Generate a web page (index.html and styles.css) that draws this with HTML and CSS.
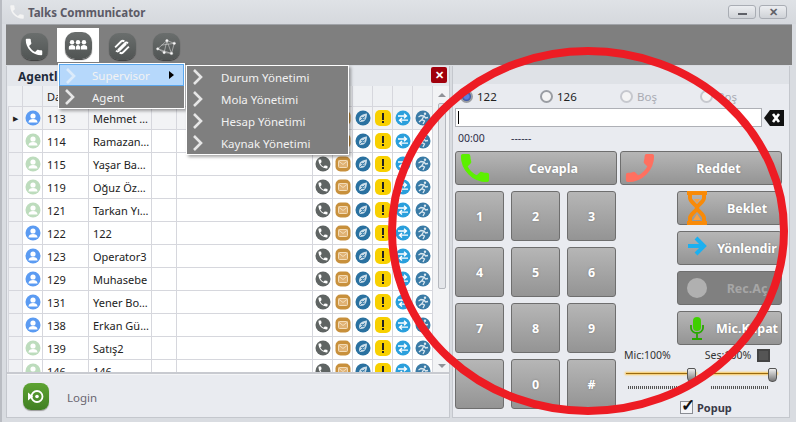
FILE: index.html
```html
<!DOCTYPE html>
<html lang="tr">
<head>
    <meta charset="UTF-8">
    <title>Talks Communicator</title>
    <link rel="stylesheet" href="styles.css">
</head>
<body>
    <svg class="defs" width="0" height="0">
        <symbol id="call" viewBox="0 0 24 24"><path d="M6.600 10.800c1.400 2.800 3.800 5.100 6.600 6.600l2.200-2.200c.3-.3.7-.4 1-.2 1.100.4 2.300.6 3.600.6.600 0 1 .4 1 1V20c0 .6-.4 1-1 1C10.600 21 3 13.400 3 4c0-.6.4-1 1-1h3.500c.6 0 1 .4 1 1 0 1.300.2 2.500.6 3.600.1.300 0 .7-.2 1z"/></symbol>
        <symbol id="chev" viewBox="0 0 12 16"><path d="M2 1l7 7-7 7" fill="none" stroke="currentColor" stroke-width="2.600"/></symbol>
        <symbol id="i-user" viewBox="0 0 16 16"><circle cx="8" cy="8" r="7.500" fill="currentColor"/><circle cx="8" cy="6" r="2.600" fill="#fff"/><path d="M3.400 12.400c.4-2.600 2.200-3.400 4.600-3.400s4.200.8 4.600 3.400z" fill="#fff"/></symbol>
        <symbol id="i-phone" viewBox="0 0 16 16"><circle cx="8" cy="8" r="7.500" fill="#5f6463"/><svg x="2" y="2" width="12" height="12" viewBox="0 0 24 24"><path fill="#fff" d="M6.600 10.800c1.400 2.800 3.800 5.100 6.600 6.600l2.200-2.200c.3-.3.7-.4 1-.2 1.100.4 2.300.6 3.600.6.600 0 1 .4 1 1V20c0 .6-.4 1-1 1C10.600 21 3 13.400 3 4c0-.6.4-1 1-1h3.500c.6 0 1 .4 1 1 0 1.300.2 2.500.6 3.600.1.300 0 .7-.2 1z"/></svg></symbol>
        <symbol id="i-mail" viewBox="0 0 16 16"><rect x=".5" y=".5" width="15" height="15" rx="5" fill="#c8903c"/><rect x="3.500" y="4.500" width="9" height="7" rx="1" fill="#e0b274" stroke="#f3dcb8"/><path d="M3.500 5l4.500 3.500L12.500 5" fill="none" stroke="#f3dcb8"/></symbol>
        <symbol id="i-leaf" viewBox="0 0 16 16"><circle cx="8" cy="8" r="7.500" fill="#2a71a0"/><path d="M4 10c0-4 3-6 8-6.500 0 5-2 8.500-6.500 8.500-.8 0-1.200-.8-1.500-2z" fill="#c9dce8"/><path d="M5 11l5-5M6 7.500l4 .5M7 9.500l2.500 0" stroke="#2a71a0" stroke-width=".8"/></symbol>
        <symbol id="i-warn" viewBox="0 0 16 16"><rect width="16" height="16" rx="5" fill="#f8d000"/><rect x="7" y="3" width="2" height="7" fill="#222"/><rect x="7" y="11" width="2" height="2" fill="#222"/></symbol>
        <symbol id="i-swap" viewBox="0 0 16 16"><circle cx="8" cy="8" r="7.500" fill="#2a9fdc"/><path d="M3 6h8M9 3.800L11.500 6 9 8.200M13 10.200H5M7 8l-2.500 2.200L7 12.400" fill="none" stroke="#fff" stroke-width="1.300"/></symbol>
        <symbol id="i-run" viewBox="0 0 16 16"><circle cx="8" cy="8" r="7.500" fill="#3a7ba6"/><circle cx="10" cy="3.800" r="1.200" fill="#dbe8f0"/><path d="M3.500 7L6 5.500l3 .5-2 3.500 2.500 1.500-1.500 3M7 9.500l-3 2.500M9 6l1.500 2 2.500-.5" fill="none" stroke="#dbe8f0" stroke-width="1.300"/></symbol>
    </svg>

    <div class="window">
        <div class="titlebar">
            <svg class="title-icon"><use href="#call"/></svg>
            <span class="title-text">Talks Communicator</span>
            <div class="win-btns">
                <button class="win-btn"><span class="min-mark"></span></button>
                <button class="win-btn close-mark">✕</button>
            </div>
        </div>
        <div class="main">
            <div class="toolbar">
                <div class="tool"><span class="tool-face">
                    <svg class="tool-svg" viewBox="0 0 24 24"><use href="#call"/></svg>
                </span></div>
                <div class="tool active"><span class="tool-face">
                    <svg class="tool-svg" viewBox="0 0 24 24">
                        <circle cx="5.500" cy="9" r="2.400"/><circle cx="12" cy="9" r="2.400"/><circle cx="18.500" cy="9" r="2.400"/>
                        <path d="M2 17v-2.500c0-1.500 1.500-2.500 3.500-2.500S9 13 9 14.500V17zM9.800 17v-2.500c0-1.500 1-2.500 2.200-2.500s2.200 1 2.200 2.500V17zM15 17v-2.500c0-1.500 1.500-2.500 3.500-2.500s3.500 1 3.500 2.500V17z"/>
                    </svg>
                </span></div>
                <div class="tool"><span class="tool-face">
                    <svg class="tool-svg stroked" viewBox="0 0 24 24">
                        <path d="M4.500 12.500L11 6a2.500 2.500 0 0 1 3.500 0M7.500 15.500L15 8a2.500 2.500 0 0 1 3.500 0M19.500 11.500L13 18a2.500 2.500 0 0 1-3.500 0M16.500 8.500L9 16a2.500 2.500 0 0 1-3.500 0"/>
                    </svg>
                </span></div>
                <div class="tool"><span class="tool-face">
                    <svg class="tool-svg thin" viewBox="0 0 24 24">
                        <path d="M3 14L13 5l8 3-3 11-8-1zM3 14l15 5M13 5l-3 13M13 5l5 14M7 10l14-2"/>
                        <circle cx="3" cy="14" r="1.300"/><circle cx="13" cy="5" r="1.300"/><circle cx="21" cy="8" r="1.300"/><circle cx="18" cy="19" r="1.300"/><circle cx="10" cy="18" r="1.300"/>
                    </svg>
                </span></div>
            </div>
            <div class="content">
                <section class="left-panel">
                    <div class="panel-head">
                        <strong class="panel-title">Agentler</strong>
                        <button class="panel-close">✕</button>
                    </div>
                    <div class="grid-wrap">
                        <div class="grid">
                            <div class="row head">
                                <span class="cell"></span><span class="cell"></span><span class="cell txt">Dahili</span><span class="cell"></span><span class="cell"></span><span class="cell"></span>
                                <span class="cell"></span><span class="cell"></span><span class="cell"></span><span class="cell"></span><span class="cell"></span><span class="cell"></span>
                            </div>
                            <div id="rows"></div>
                        </div>
                        <div class="scroll">
                            <span class="arrow up"></span>
                            <span class="thumb"></span>
                            <span class="arrow down"></span>
                        </div>
                    </div>
                    <div class="login-bar">
                        <span class="login-icon">
                            <svg viewBox="0 0 26 26" class="login-svg"><circle cx="14" cy="13" r="5.500"/><circle cx="14" cy="13" r="1.800" class="solid"/><path d="M5 9l5 4-5 4z" class="solid"/></svg>
                        </span>
                        <span class="login-text">Login</span>
                    </div>
                </section>

                <section class="right-panel">
                    <div class="band"></div>
                    <div class="lines">
                        <label class="line on"><span class="radio"></span>122</label>
                        <label class="line"><span class="radio"></span>126</label>
                        <label class="line off"><span class="radio"></span>Boş</label>
                        <label class="line off"><span class="radio"></span>Boş</label>
                    </div>
                    <div class="dial">
                        <div class="dial-input"><span class="caret"></span></div>
                        <svg class="backspace" viewBox="0 0 20 16"><path d="M6 0h14v16H6L0 8z" fill="#111"/><path d="M9 4l6 8M15 4l-6 8" stroke="#fff" stroke-width="2.600"/></svg>
                    </div>
                    <div class="status"><span class="time">00:00</span><span>------</span></div>
                    <div class="call-btns">
                        <button class="btn call"><svg class="call-icon green"><use href="#call"/></svg>Cevapla</button>
                        <button class="btn call"><svg class="call-icon red"><use href="#call"/></svg>Reddet</button>
                    </div>
                    <div class="lower">
                        <div class="keys">
                            <button class="btn">1</button><button class="btn">2</button><button class="btn">3</button>
                            <button class="btn">4</button><button class="btn">5</button><button class="btn">6</button>
                            <button class="btn">7</button><button class="btn">8</button><button class="btn">9</button>
                            <button class="btn"></button><button class="btn">0</button><button class="btn">#</button>
                        </div>
                        <div class="side">
                            <button class="btn act">
                                <svg class="act-icon" viewBox="0 0 20 34"><path d="M0 2h20M0 32h20M3 2v5c0 4 7 7 7 10s-7 6-7 10v5M17 2v5c0 4-7 7-7 10s7 6 7 10v5" fill="none" stroke="#f88a08" stroke-width="4"/><path d="M7 8h6l-3 4zM10 23l4 6H6z" fill="#f8a040"/></svg>
                                <span>Beklet</span>
                            </button>
                            <button class="btn act">
                                <svg class="act-icon" viewBox="0 0 20 34"><path d="M1 15h13M9 7l8 8-8 8" fill="none" stroke="#1cb0f0" stroke-width="4"/></svg>
                                <span>Yönlendir</span>
                            </button>
                            <button class="btn act rec">
                                <svg class="act-icon" viewBox="0 0 20 34"><circle cx="10" cy="17" r="10" fill="#b0b0b0"/></svg>
                                <span>Rec.Aç</span>
                            </button>
                            <button class="btn act">
                                <svg class="act-icon" viewBox="0 0 20 34"><rect x="6" y="6" width="8" height="14" rx="4" fill="#3fd000"/><path d="M4 14v3c0 3 3 5 6 5s6-2 6-5v-3M10 22v5M5 28h10" fill="none" stroke="#28a800" stroke-width="1.800"/></svg>
                                <span>Mic.Kapat</span>
                            </button>
                            <div class="levels">
                                <span>Mic:100%</span>
                                <span class="ses">Ses:100%</span>
                                <span class="mute"></span>
                            </div>
                            <div class="sliders">
                                <div class="slider"><span class="track"></span><span class="knob"></span><span class="ticks"></span></div>
                                <div class="slider wide"><span class="track"></span><span class="knob"></span><span class="ticks"></span></div>
                            </div>
                            <label class="popup"><span class="check">✓</span>Popup</label>
                        </div>
                    </div>
                </section>
            </div>
        </div>
    </div>

    <div class="menu">
        <div class="menu-item hover"><svg class="chev"><use href="#chev"/></svg>Supervisor<span class="more"></span></div>
        <div class="menu-item"><svg class="chev"><use href="#chev"/></svg>Agent</div>
    </div>
    <div class="menu sub">
        <div class="menu-item"><svg class="chev"><use href="#chev"/></svg>Durum Yönetimi</div>
        <div class="menu-item"><svg class="chev"><use href="#chev"/></svg>Mola Yönetimi</div>
        <div class="menu-item"><svg class="chev"><use href="#chev"/></svg>Hesap Yönetimi</div>
        <div class="menu-item"><svg class="chev"><use href="#chev"/></svg>Kaynak Yönetimi</div>
    </div>

    <svg class="ring" width="796" height="422"><ellipse cx="588" cy="231" rx="196" ry="180"/></svg>

    <script src="script.js"></script>
</body>
</html>
```

FILE: styles.css
```css
* {
    box-sizing: border-box;
}
body {
    font-family: 'Noto Sans', 'Liberation Sans', sans-serif;
    font-size: 11px;
    margin: 0;
    width: 796px;
    height: 422px;
    overflow: hidden;
    position: relative;
    color: #222;
    background-color: #d9dce1;
}
button {
    font-family: inherit;
    padding: 0;
}
.defs {
    position: absolute;
}
.window {
    height: 422px;
    display: flex;
    flex-direction: column;
    border-left: 2px solid #b9bcc2;
}
.titlebar {
    height: 24px;
    display: flex;
    align-items: center;
    padding: 0 9px 0 6px;
    background: linear-gradient(#dfe2e6, #d5d8dd);
}
.title-icon {
    width: 18px;
    height: 18px;
    fill: #f4f4f4;
}
.title-text {
    margin-left: 2px;
    font-weight: bold;
    font-size: 11.500px;
    color: #5c5a66;
}
.win-btns {
    margin-left: auto;
    display: flex;
    gap: 3px;
    margin-top: -1px;
}
.win-btn {
    width: 28px;
    height: 14px;
    border: 1px solid #a9adb4;
    border-radius: 3px;
    background: linear-gradient(#eceef1, #cfd2d7);
    display: flex;
    align-items: center;
    justify-content: center;
}
.min-mark {
    width: 9px;
    height: 2px;
    margin-top: 5px;
    background-color: #5f6168;
}
.close-mark {
    font-size: 11px;
    font-weight: bold;
    color: #5f6168;
}
.main {
    flex: 1;
    padding: 0 4px 4px 4px;
    display: flex;
    flex-direction: column;
}
.toolbar {
    height: 41px;
    background-color: #7f7f7f;
    display: flex;
    padding-left: 7px;
    border-top: 1px solid #a0a3a8;
}
.tool {
    width: 42px;
    height: 37px;
    margin-top: 3px;
    margin-right: 2px;
    display: flex;
    align-items: center;
    justify-content: center;
}
.tool.active {
    background-color: #fff;
    height: 34px;
}
.tool-face {
    width: 27px;
    height: 27px;
    border-radius: 10px;
    background: linear-gradient(#6a6e6d, #505453);
    box-shadow: 0 1px 1px #3c3c3c;
    display: flex;
    align-items: center;
    justify-content: center;
}
.tool-svg {
    width: 22px;
    height: 22px;
    fill: #fff;
}
.tool-svg.stroked {
    fill: none;
    stroke: #fff;
    stroke-width: 2;
}
.tool-svg.thin {
    stroke: #ddd;
    stroke-width: .6;
}
.tool-svg.thin path {
    fill: none;
}
.content {
    flex: 1;
    display: flex;
    gap: 2px;
    padding-top: 1px;
    min-height: 0;
}
.left-panel {
    width: 444px;
    display: flex;
    flex-direction: column;
    background-color: #e9ebf0;
    border: 1px solid #c4c7cd;
    border-top: none;
}
.panel-head {
    height: 20px;
    display: flex;
    align-items: center;
    justify-content: space-between;
    padding-left: 11px;
    padding-right: 2px;
    background-color: #e4e7ec;
}
.panel-title {
    font-size: 12px;
    color: #1e2a3a;
}
.panel-close {
    width: 16px;
    height: 16px;
    margin-top: -3px;
    background-color: #a0000c;
    border: none;
    border-radius: 2px;
    color: #fff;
    font-size: 11px;
    font-weight: bold;
}
.grid-wrap {
    height: 288px;
    display: flex;
    overflow: hidden;
    padding-left: 1px;
    border-bottom: 2px solid #c8cad0;
}
.grid {
    width: 425px;
}
.row {
    display: grid;
    grid-template-columns: 15px 20px 46px 63px 25px 136px repeat(6, 20px);
    height: 23px;
    background-color: #fff;
}
.row.head {
    height: 21px;
    background-color: #eef0f3;
}
.row.selected {
    background-color: #f2f3f5;
}
.cell {
    display: flex;
    align-items: center;
    justify-content: center;
    border-right: 1px solid #d6d7dd;
    border-bottom: 1px solid #d6d7dd;
    white-space: nowrap;
    overflow: hidden;
}
.cell.txt {
    justify-content: flex-start;
    padding-left: 4px;
}
.cell.mark {
    background-color: #f0f1f4;
    border-left: 1px solid #d6d7dd;
    font-size: 7px;
}
.cell svg {
    width: 16px;
    height: 16px;
}
.blue {
    color: #5b9bf2;
}
.pale {
    color: #bddcbd;
}
.scroll {
    width: 17px;
    display: flex;
    flex-direction: column;
    align-items: center;
    background-color: #f2f3f5;
    padding-left: 1px;
}
.arrow {
    width: 0;
    height: 0;
    border-left: 4px solid transparent;
    border-right: 4px solid transparent;
}
.arrow.up {
    margin-top: 7px;
    border-bottom: 4px solid #8f9298;
}
.arrow.down {
    margin-top: 75px;
    border-top: 4px solid #8f9298;
}
.thumb {
    width: 8px;
    height: 186px;
    margin-top: 6px;
    margin-left: 1px;
    background-color: #e4e6ea;
    border: 1px solid #b5b8be;
    border-radius: 2px;
}
.login-bar {
    flex: 1;
    display: flex;
    align-items: center;
    padding-left: 16px;
    border-top: 1px solid #f4f5f7;
}
.login-icon {
    width: 26px;
    height: 27px;
    margin-top: 1px;
    border-radius: 8px;
    background: linear-gradient(#5da332, #417f24);
    box-shadow: 0 1px 1px #999;
}
.login-svg {
    width: 26px;
    height: 27px;
    fill: none;
    stroke: #fff;
    stroke-width: 1.800;
}
.login-svg .solid {
    fill: #fff;
    stroke: none;
}
.login-text {
    margin-left: 18px;
    margin-top: 2px;
    font-size: 11.500px;
    color: #6a6670;
}
.right-panel {
    width: 338px;
    background-color: #e9ebf0;
    border: 1px solid #c4c7cd;
    border-top: none;
    padding: 0 2px;
}
.band {
    height: 18px;
    margin: 0 -2px;
    background-color: #dfe2e7;
}
.lines {
    height: 24px;
    display: flex;
    padding: 4px 0 0 5px;
}
.line {
    width: 80px;
    display: flex;
    align-items: center;
    gap: 4px;
    height: 16px;
    font-size: 11.500px;
}
.line.off {
    color: #a8aab2;
}
.radio {
    width: 13px;
    height: 13px;
    border-radius: 50%;
    background-color: #f4f4f4;
    border: 2px solid #9a9da3;
}
.line.on .radio {
    background: radial-gradient(#5d7fdc 35%, #34509e 70%);
}
.line.off .radio {
    border-color: #c6c8ce;
}
.dial {
    display: flex;
    align-items: center;
    gap: 2px;
    height: 19px;
}
.dial-input {
    width: 307px;
    height: 19px;
    background-color: #fff;
    border: 1px solid #aeb0b6;
    padding: 2px 2px;
}
.caret {
    display: block;
    width: 1px;
    height: 13px;
    background-color: #000;
}
.backspace {
    width: 20px;
    height: 16px;
}
.status {
    height: 24px;
    display: flex;
    align-items: center;
    padding-left: 3px;
    margin-top: -1px;
    font-size: 10.500px;
    color: #2e2e48;
}
.time {
    width: 53px;
}
.btn {
    border: 1px solid #6e6e6e;
    border-radius: 3px;
    background: linear-gradient(#b6b6b6, #949494);
    color: #fff;
    font-weight: bold;
    font-size: 12.500px;
    text-shadow: 0 0 2px #777;
}
.call-btns {
    display: flex;
    gap: 3px;
    height: 34px;
    margin-top: 1px;
}
.btn.call {
    width: 162px;
    display: flex;
    align-items: center;
    justify-content: center;
    padding-left: 35px;
    position: relative;
}
.call-icon {
    width: 36px;
    height: 36px;
    position: absolute;
    left: 1px;
    top: -2px;
    stroke-width: .8;
}
.call-icon.green {
    fill: #5cf000;
    stroke: #5cf000;
}
.call-icon.red {
    fill: #ff7060;
    stroke: #ff7060;
    transform: scaleX(-1);
}
.lower {
    display: flex;
    padding-top: 6px;
}
.keys {
    width: 161px;
    display: grid;
    grid-template-columns: repeat(3, 49px);
    grid-auto-rows: 50px;
    gap: 6px 7px;
}
.side {
    width: 158px;
    margin-left: 8px;
    display: flex;
    flex-direction: column;
    align-items: flex-end;
    gap: 6px;
}
.btn.act {
    width: 105px;
    height: 34px;
    display: flex;
    align-items: center;
    padding-left: 9px;
}
.btn.act span {
    flex: 1;
    text-align: center;
    padding-left: 6px;
}
.act-icon {
    width: 20px;
    height: 34px;
    flex: none;
}
.btn.rec {
    background: #808080;
    color: #a6a6a6;
    text-shadow: none;
}
.levels {
    width: 100%;
    display: flex;
    align-items: center;
    height: 14px;
    margin-top: -3px;
    font-size: 10.500px;
    color: #333;
}
.ses {
    margin-left: 34px;
}
.mute {
    width: 13px;
    height: 13px;
    margin-left: 6px;
    background-color: #555;
    border: 2px solid #444;
}
.sliders {
    width: 100%;
    display: flex;
    gap: 13px;
    height: 24px;
    padding-left: 2px;
}
.slider {
    width: 70px;
    position: relative;
}
.slider.wide {
    width: 68px;
}
.track {
    position: absolute;
    left: 0;
    right: 0;
    top: 5px;
    height: 1px;
    background-color: #9a6a10;
    box-shadow: 0 0 2px 1px #fbc95c;
}
.knob {
    position: absolute;
    right: 0;
    top: 0;
    width: 9px;
    height: 14px;
    border: 1px solid #555;
    border-radius: 2px 2px 4px 4px;
    background: linear-gradient(#eee, #777);
}
.ticks {
    position: absolute;
    left: 2px;
    right: 8px;
    top: 18px;
    height: 3px;
    background: repeating-linear-gradient(90deg, #555 0 1px, transparent 1px 2px);
}
.popup {
    align-self: flex-start;
    margin-left: 56px;
    margin-top: 2px;
    display: flex;
    align-items: center;
    gap: 4px;
    font-weight: bold;
    font-size: 11px;
    color: #3a3a48;
}
.check {
    width: 13px;
    height: 13px;
    background-color: #f4f5f8;
    border: 1px solid #8a8d94;
    font-size: 17px;
    line-height: 6px;
    color: #111;
}
/* floating menus */
.menu {
    position: absolute;
    left: 58px;
    top: 63px;
    width: 127px;
    background-color: #7f7f7f;
    border: 1px solid #fff;
    box-shadow: 2px 2px 3px rgba(0, 0, 0, 0.35);
}
.menu.sub {
    left: 186px;
    top: 65px;
    width: 163px;
}
.menu-item {
    height: 22px;
    display: flex;
    align-items: center;
    font-size: 11.500px;
    color: #f2f2f2;
    position: relative;
    padding-left: 33px;
}
.menu.sub .menu-item {
    padding-left: 34px;
}
.menu-item.hover {
    background-color: #b6d8fb;
    border: 1px solid #5aa7ee;
    padding-left: 32px;
}
.chev {
    position: absolute;
    left: 5px;
    top: 3px;
    width: 12px;
    height: 16px;
    color: #e6e6e6;
}
.menu-item.hover .chev {
    color: #dcebfa;
}
.more {
    position: absolute;
    right: 9px;
    top: 6px;
    border-left: 5px solid #000;
    border-top: 4px solid transparent;
    border-bottom: 4px solid transparent;
}
.ring {
    position: absolute;
    left: 0;
    top: 0;
    pointer-events: none;
}
.ring ellipse {
    fill: none;
    stroke: #ed1c24;
    stroke-width: 8;
}
```

FILE: script.js
```js
const agents = [
    ['113', 'Mehmet …', 'blue'],
    ['114', 'Ramazan…', 'pale'],
    ['115', 'Yaşar Ba…', 'pale'],
    ['119', 'Oğuz Öz…', 'pale'],
    ['121', 'Tarkan Yı…', 'pale'],
    ['122', '122', 'blue'],
    ['123', 'Operator3', 'blue'],
    ['129', 'Muhasebe', 'blue'],
    ['131', 'Yener Bo…', 'blue'],
    ['138', 'Erkan Gü…', 'blue'],
    ['139', 'Satış2', 'pale'],
    ['146', '146', 'pale']
];
const actions = ['i-phone', 'i-mail', 'i-leaf', 'i-warn', 'i-swap', 'i-run'];

function buildRows() {
    const rowsDiv = document.getElementById('rows');
    agents.forEach((agent, index) => {
        const row = document.createElement('div');
        row.className = index === 0 ? 'row selected' : 'row';
        let html = `<span class="cell mark">${index === 0 ? '▶' : ''}</span>`;
        html += `<span class="cell ${agent[2]}"><svg><use href="#i-user"/></svg></span>`;
        html += `<span class="cell txt">${agent[0]}</span><span class="cell txt">${agent[1]}</span>`;
        html += '<span class="cell"></span><span class="cell"></span>';
        actions.forEach(icon => {
            html += `<span class="cell"><svg><use href="#${icon}"/></svg></span>`;
        });
        row.innerHTML = html;
        rowsDiv.appendChild(row);
    });
}

buildRows();
```
